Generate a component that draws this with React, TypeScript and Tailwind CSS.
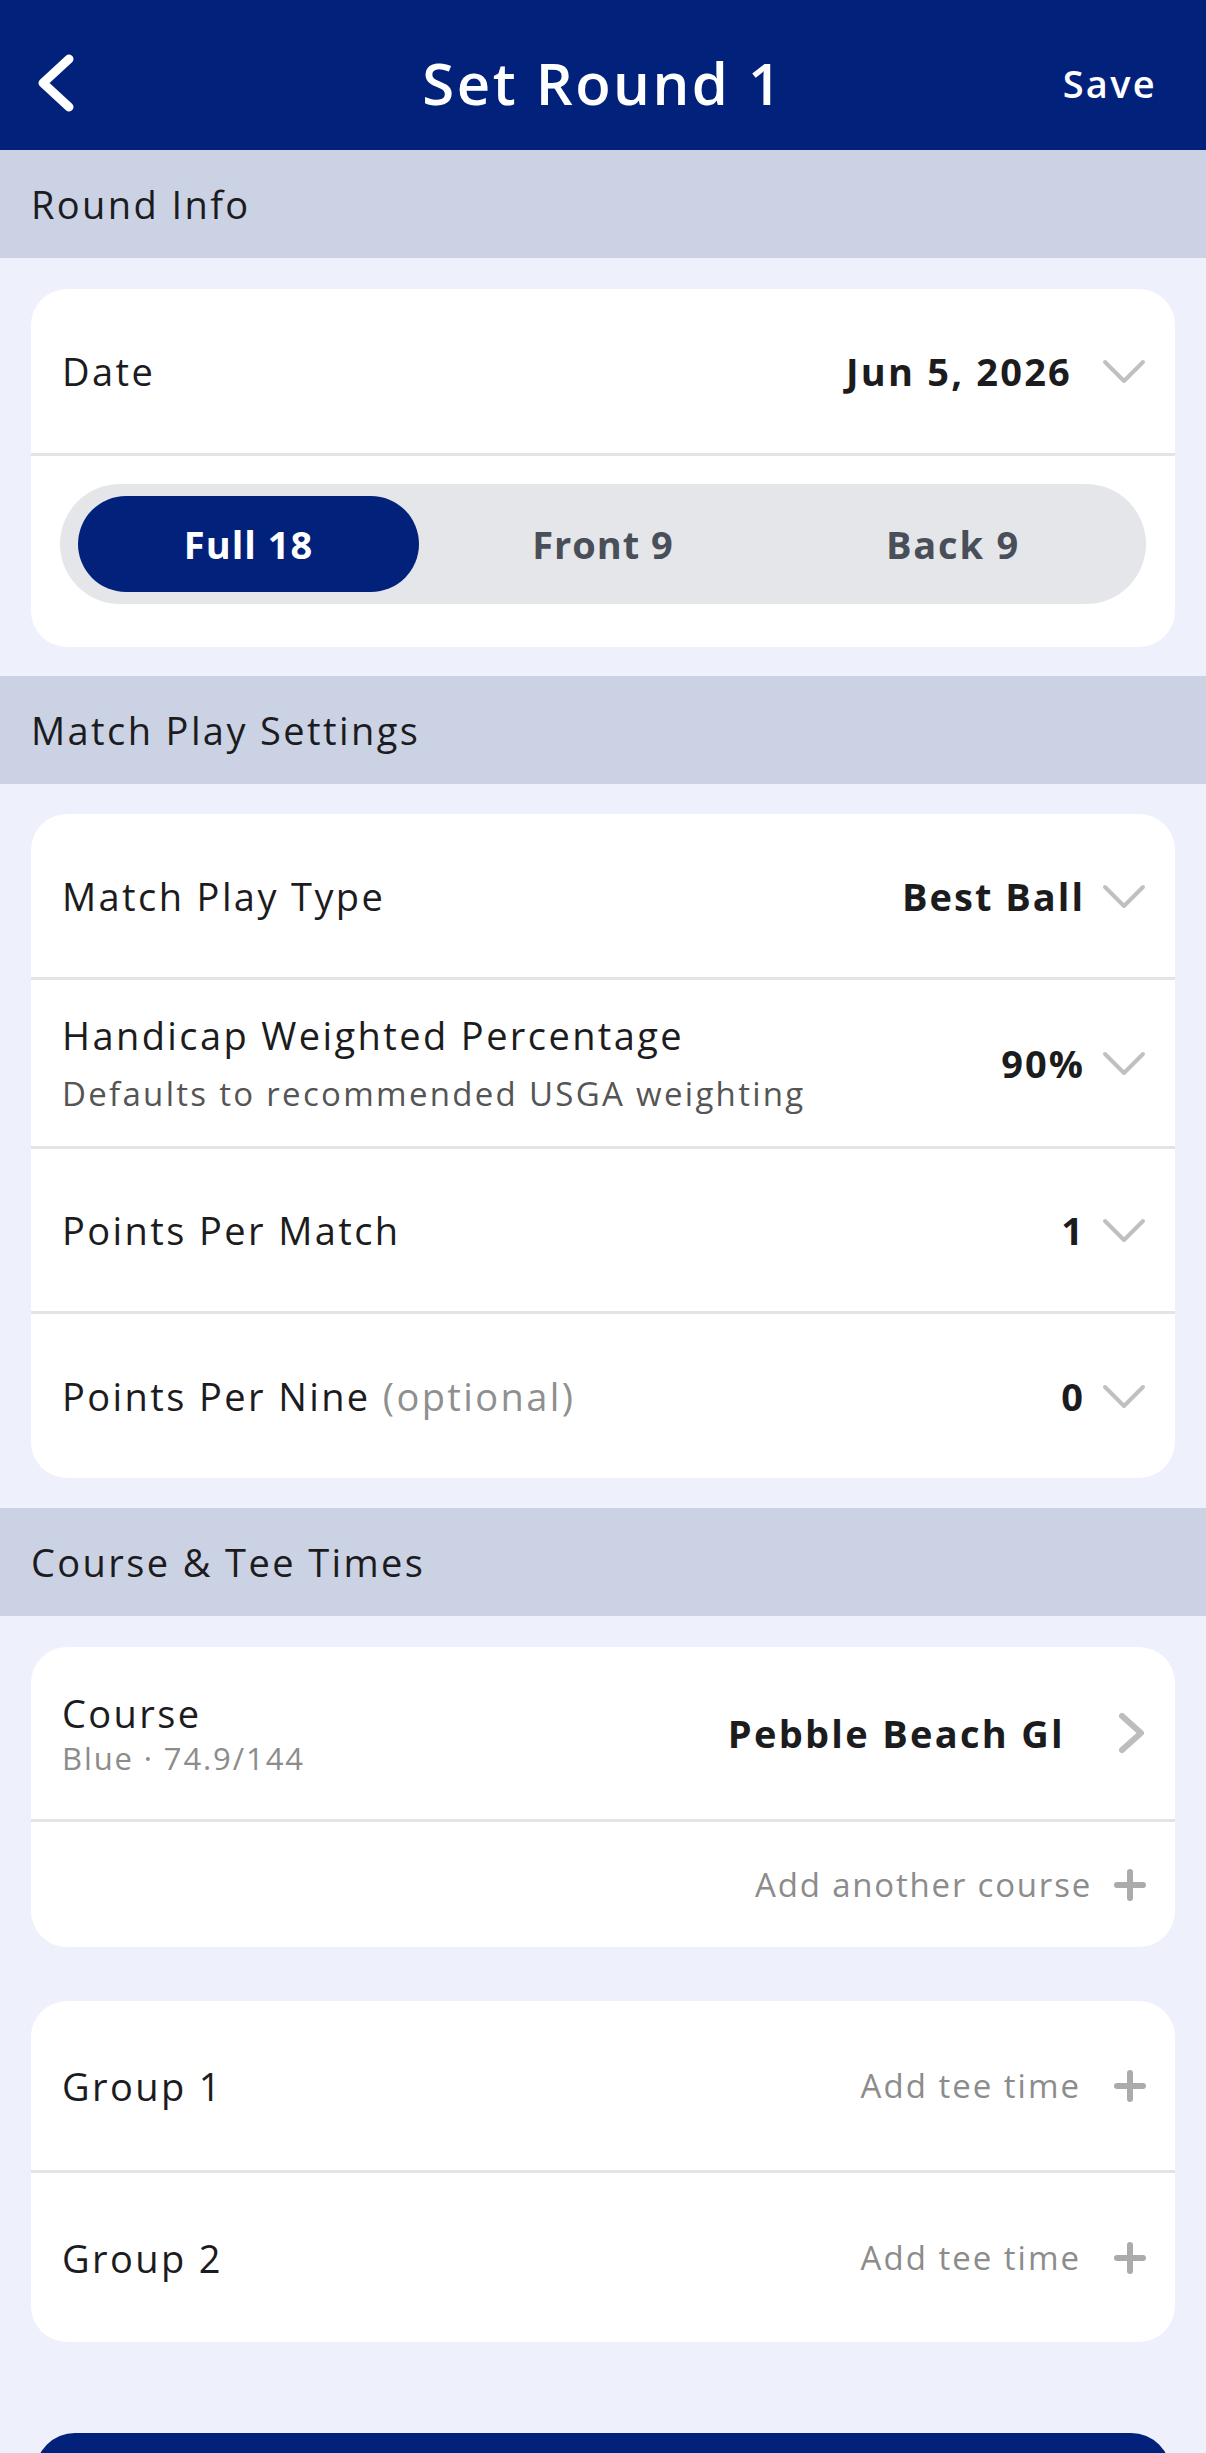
import React from 'react';

const navy = 'bg-[#02217a]';

// thin grey chevron used by the dropdown rows
const ChevronDown = () => (
  <svg width="44" height="28" viewBox="0 0 44 28" className="shrink-0">
    <polyline points="3,5 22,24 41,5" fill="none" stroke="#c0c0c0" strokeWidth="4" strokeLinecap="round" strokeLinejoin="round" />
  </svg>
);

const ChevronRight = () => (
  <svg width="30" height="44" viewBox="0 0 30 44" className="shrink-0">
    <polyline points="6,5 25,22 6,39" fill="none" stroke="#bdbdbd" strokeWidth="6" strokeLinecap="round" strokeLinejoin="round" />
  </svg>
);

const Plus = () => (
  <svg width="32" height="32" viewBox="0 0 32 32" className="shrink-0">
    <path d="M16 3 V29 M3 16 H29" fill="none" stroke="#ababab" strokeWidth="6" strokeLinecap="round" />
  </svg>
);

const SectionHeader = ({ title }: { title: string }) => (
  <div className="h-[108px] bg-[#cbd2e4] flex items-center pl-[31px]">
    <span className="text-[38px] leading-[46px] text-[#1c1c1e]">{title}</span>
  </div>
);

interface SelectRowProps {
  label: React.ReactNode;
  value: string;
  h: string;
  gap?: string;
  sub?: string;
  border?: boolean;
}

const SelectRow: React.FC<SelectRowProps> = ({ label, value, h, gap = 'gap-[17px]', sub, border = true }) => (
  <div className={`${h} flex items-center pl-[31px] pr-[29px] ${border ? 'border-t-[3px] border-[#e3e4e7]' : ''}`}>
    <div className="flex-1 flex flex-col">
      <span className="text-[38px] leading-[46px] text-[#1c1c1e]">{label}</span>
      {sub && <span className="mt-[16px] text-[33px] leading-[40px] tracking-[2.3px] text-[#555555]">{sub}</span>}
    </div>
    <div className={`flex items-center ${gap}`}>
      <span className="text-[38px] leading-[46px] font-bold tracking-[2px] text-[#1c1c1e]">{value}</span>
      <ChevronDown />
    </div>
  </div>
);

const App: React.FC = () => {
  return (
    <div className="w-full min-h-screen bg-[#eef1fc] font-['Open_Sans',sans-serif] tracking-[2.4px] overflow-hidden">
      {/* top bar */}
      <div className={`h-[150px] ${navy} pt-[16px] grid grid-cols-[1fr_auto_1fr] items-center`}>
        <div className="pl-[34px]">
          <svg width="46" height="64" viewBox="0 0 46 64">
            <polyline points="35,8 9,32 35,56" fill="none" stroke="white" strokeWidth="9" strokeLinecap="round" strokeLinejoin="round" />
          </svg>
        </div>
        <h1 className="text-[58px] leading-[70px] font-semibold tracking-[2.5px] text-white">Set Round 1</h1>
        <div className="flex justify-end pr-[49px]">
          <span className="text-[38px] leading-[44px] font-semibold tracking-[2.3px] text-white">Save</span>
        </div>
      </div>

      <SectionHeader title="Round Info" />

      <div className="mx-[31px] mt-[31px] mb-[29px] bg-white rounded-[36px] overflow-hidden">
        <div className="h-[164px] flex items-center pl-[31px] pr-[29px]">
          <span className="flex-1 text-[38px] leading-[46px] text-[#1c1c1e]">Date</span>
          <div className="flex items-center gap-[30px]">
            <span className="text-[38px] leading-[46px] font-bold tracking-[2.2px] text-[#1c1c1e]">Jun 5, 2026</span>
            <ChevronDown />
          </div>
        </div>
        <div className="border-t-[3px] border-[#e3e4e7] pt-[28px] pb-[43px] px-[29px]">
          <div className="h-[120px] rounded-full bg-[#e4e6ea] px-[18px] py-[12px] grid grid-cols-3 tracking-[1px]">
            <div className={`w-[341px] rounded-full ${navy} flex items-center justify-center`}>
              <span className="text-[38px] font-bold text-white">Full 18</span>
            </div>
            <div className="flex items-center justify-center">
              <span className="text-[38px] font-bold text-[#4a4e58]">Front 9</span>
            </div>
            <div className="flex items-center justify-center">
              <span className="text-[38px] font-bold tracking-[1.8px] text-[#4a4e58]">Back 9</span>
            </div>
          </div>
        </div>
      </div>

      <SectionHeader title="Match Play Settings" />

      <div className="mx-[31px] mt-[30px] mb-[30px] bg-white rounded-[36px] overflow-hidden">
        <SelectRow label="Match Play Type" value="Best Ball" h="h-[163px]" border={false} />
        <SelectRow
          label="Handicap Weighted Percentage"
          sub="Defaults to recommended USGA weighting"
          value="90%"
          h="h-[169px]"
        />
        <SelectRow label="Points Per Match" value="1" h="h-[165px]" />
        <SelectRow
          label={
            <>
              Points Per Nine <span className="text-[#8f8f8f]">(optional)</span>
            </>
          }
          value="0"
          h="h-[167px]"
        />
      </div>

      <SectionHeader title="Course & Tee Times" />

      <div className="mx-[31px] mt-[31px] bg-white rounded-[36px] overflow-hidden">
        <div className="h-[172px] flex items-center pl-[31px] pr-[29px]">
          <div className="flex-1 flex flex-col">
            <span className="text-[38px] leading-[46px] text-[#1c1c1e]">Course</span>
            <span className="mt-[4px] text-[31px] leading-[36px] tracking-[1.9px] text-[#8c8c8c]">Blue · 74.9/144</span>
          </div>
          <div className="flex items-center gap-[51px]">
            <span className="text-[38px] leading-[46px] font-bold tracking-[2.3px] text-[#1c1c1e]">Pebble Beach Gl</span>
            <ChevronRight />
          </div>
        </div>
        <div className="h-[128px] border-t-[3px] border-[#e3e4e7] flex items-center justify-end gap-[22px] pr-[29px]">
          <span className="text-[33px] leading-[40px] tracking-[1.8px] text-[#8c8c8c]">Add another course</span>
          <Plus />
        </div>
      </div>

      <div className="mx-[31px] mt-[54px] bg-white rounded-[36px] overflow-hidden">
        {['Group 1', 'Group 2'].map((g, i) => (
          <div
            key={g}
            className={`${i === 0 ? 'h-[169px]' : 'h-[172px] border-t-[3px] border-[#e3e4e7]'} flex items-center pl-[31px] pr-[29px]`}
          >
            <span className="flex-1 text-[38px] leading-[46px] text-[#1c1c1e]">{g}</span>
            <div className="flex items-center gap-[33px]">
              <span className="text-[33px] leading-[40px] tracking-[2px] text-[#8c8c8c]">Add tee time</span>
              <Plus />
            </div>
          </div>
        ))}
      </div>

      <div className={`mx-[35px] mt-[91px] h-[150px] rounded-[40px] ${navy}`} />
    </div>
  );
};

export default App;
